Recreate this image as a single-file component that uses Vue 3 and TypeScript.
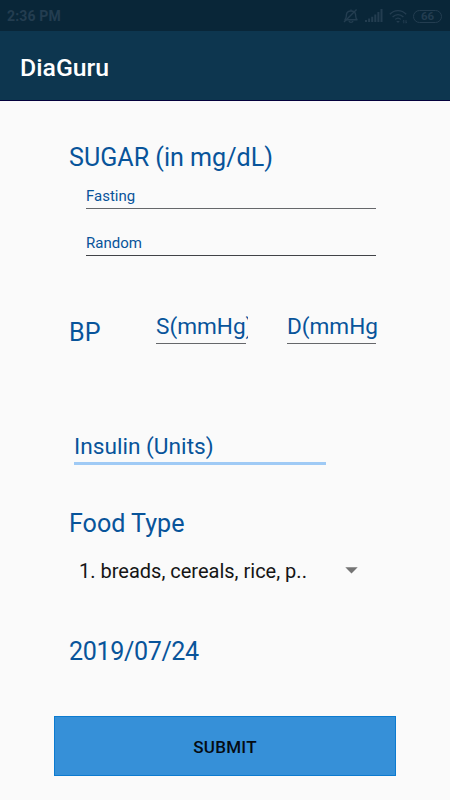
<script setup lang="ts">
import { ref } from 'vue'

const time = '2:36 PM'
const battery = 66
const fasting = ref('')
const random = ref('')
const systolic = ref('')
const diastolic = ref('')
const insulin = ref('')
const food = '1. breads, cereals, rice, p..'
const date = '2019/07/24'
</script>

<template>
  <div class="screen">
    <div class="status">
      <span class="time">{{ time }}</span>
      <div class="status-icons">
        <svg class="bell" width="16" height="16" viewBox="0 0 16 16" fill="none" stroke="currentColor" stroke-width="1.4">
          <path d="M1.6 11.8C3.6 10.8 3.2 9 3.4 6.9C3.6 4.5 5.4 3 8 3C10.6 3 12.4 4.5 12.6 6.9C12.8 9 12.4 10.8 14.4 11.8Z" />
          <path d="M6 13C6.6 14.8 9.4 14.8 10 13M8 1.4V3M1 14L13.6 1.4" />
        </svg>
        <svg class="signal" width="18" height="14" viewBox="0 0 18 14" fill="currentColor">
          <path d="M0 11h2v2H0zM3.1 9.5h2V13h-2zM6.2 7.8h2V13h-2zM9.3 5.5h2V13h-2zM12.4 3h2v10h-2zM15.5 0h2v13h-2z" />
        </svg>
        <svg class="wifi" width="19" height="15" viewBox="0 0 19 15" fill="none" stroke="currentColor" stroke-width="1.3">
          <path d="M.8 5.2C5.4.3 12.6.3 17.2 5.2M3.6 8C6.8 4.7 11.2 4.7 14.4 8M6.2 10.4C8 8.7 10 8.7 11.8 10.4" />
          <path d="M7.2 12L9 14L10.8 12Z" fill="currentColor" stroke="none" />
          <path d="M14.8 14.3V11.3M14 12.2L14.8 11.3M17 11.2V14.2L17.8 13.2" stroke-width="1" />
        </svg>
        <span class="battery">{{ battery }}</span>
      </div>
    </div>
    <header class="appbar">DiaGuru</header>

    <main class="form">
      <h2 class="label sugar">SUGAR (in mg/dL)</h2>
      <input v-model="fasting" class="field small" placeholder="Fasting" />
      <input v-model="random" class="field small second" placeholder="Random" />

      <div class="bp">
        <span class="label bp-label">BP</span>
        <input v-model="systolic" class="field medium" placeholder="S(mmHg)" />
        <input v-model="diastolic" class="field medium" placeholder="D(mmHg)" />
      </div>

      <input v-model="insulin" class="field insulin" placeholder="Insulin (Units)" />

      <h2 class="label food">Food Type</h2>
      <div class="spinner">
        <span>{{ food }}</span>
        <svg width="13" height="7" viewBox="0 0 13 7"><path d="M.3.3H12.7L6.5 6.5Z" fill="#747474" /></svg>
      </div>

      <div class="label date">{{ date }}</div>
    </main>
    <button class="submit" type="button">SUBMIT</button>
  </div>
</template>

<style>
body {
  margin: 0;
  background: #fafafa;
}
</style>

<style scoped>
.screen {
  width: 450px;
  height: 800px;
  overflow: hidden;
  display: flex;
  flex-direction: column;
  background: #fafafa;
  font-family: Roboto, sans-serif;
}
.status {
  height: 31px;
  flex: none;
  box-sizing: border-box;
  padding: 1px 8px 0 7px;
  display: flex;
  align-items: center;
  justify-content: space-between;
  background: #092638;
  color: #233d50;
}
.time {
  font-size: 14px;
  font-weight: 700;
  letter-spacing: 0.15px;
}
.status-icons {
  display: flex;
  align-items: center;
}
.signal {
  margin-left: 6px;
}
.wifi {
  margin-left: 6px;
}
.battery {
  box-sizing: border-box;
  width: 29px;
  height: 13px;
  margin-left: 5px;
  border: 1.5px solid currentColor;
  border-radius: 7px;
  font-size: 11.5px;
  font-weight: 700;
  line-height: 11px;
  text-align: center;
}
.appbar {
  height: 70px;
  flex: none;
  box-sizing: border-box;
  padding: 2px 20px 0;
  border-bottom: 1px solid #04003c;
  background: #0d364f;
  color: #fff;
  font-size: 24.8px;
  font-weight: 500;
  line-height: 70px;
}
.form {
  height: 615px;
  flex: none;
  padding: 0 70px 0 69px;
  display: flex;
  flex-direction: column;
}
.label {
  margin: 0;
  color: #08549a;
  font-size: 25.1px;
  font-weight: 400;
  line-height: 30px;
  white-space: nowrap;
}
.sugar {
  margin-top: 42px;
}
.field {
  box-sizing: border-box;
  flex: none;
  margin: 0;
  padding: 0;
  border: 0;
  border-bottom: 1px solid #65676a;
  border-radius: 0;
  outline: 0;
  background: transparent;
  color: #08549a;
  font-family: inherit;
}
.field::placeholder {
  color: #08549a;
  opacity: 1;
}
.small {
  width: 290px;
  height: 27px;
  margin: 9px 0 0 17px;
  padding: 1px 0 0;
  font-size: 15px;
}
.second {
  margin-top: 20px;
  border-bottom-color: #414347;
}
.bp {
  height: 40px;
  margin-top: 54px;
  display: flex;
  align-items: flex-start;
}
.bp-label {
  width: 87px;
  padding-top: 8px;
}
/* The rule stops 2px short of the text's clipping edge. */
.medium {
  width: 92px;
  height: 34px;
  padding-bottom: 1px;
  border-bottom: 0;
  background: linear-gradient(#65676a, #65676a) left bottom / 90px 1px no-repeat;
  font-size: 22.6px;
}
.medium + .medium {
  width: 91px;
  margin-left: 39px;
  background-size: 89px 1px;
}
.insulin {
  width: 252px;
  height: 36px;
  margin: 79px 0 0 5px;
  padding: 1px 0 0;
  border-bottom: 3px solid #9fcaf5;
  font-size: 22.7px;
}
.food {
  margin-top: 44px;
}
.spinner {
  height: 30px;
  margin-top: 16px;
  padding: 1px 22px 0 10px;
  box-sizing: border-box;
  display: flex;
  align-items: center;
  justify-content: space-between;
  color: #151515;
  font-size: 20px;
}
.date {
  margin-top: 52px;
  letter-spacing: -0.37px;
}
.submit {
  width: 342px;
  height: 60px;
  flex: none;
  margin: 0 0 0 54px;
  padding: 2px 0 0;
  border: 1px solid #0c7bd0;
  border-radius: 0;
  background: #3690d8;
  color: #050b12;
  font-family: inherit;
  font-size: 17px;
  font-weight: 500;
  letter-spacing: 0.3px;
}
</style>
